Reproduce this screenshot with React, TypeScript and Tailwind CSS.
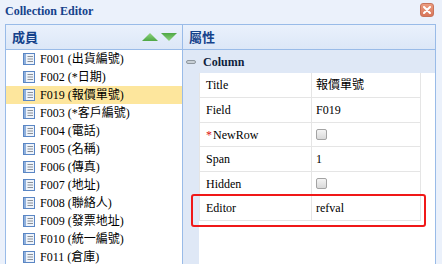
import React from 'react'

const members = [
  'F001 (出貨編號)',
  'F002 (*日期)',
  'F019 (報價單號)',
  'F003 (*客戶編號)',
  'F004 (電話)',
  'F005 (名稱)',
  'F006 (傳真)',
  'F007 (地址)',
  'F008 (聯絡人)',
  'F009 (發票地址)',
  'F010 (統一編號)',
  'F011 (倉庫)',
]

const props: { label: string; value?: string; check?: boolean; required?: boolean; h: string }[] = [
  { label: 'Title', value: '報價單號', h: 'h-[25px]' },
  { label: 'Field', value: 'F019', h: 'h-[25px]' },
  { label: 'NewRow', check: true, required: true, h: 'h-[24px]' },
  { label: 'Span', value: '1', h: 'h-[25px]' },
  { label: 'Hidden', check: true, h: 'h-[24px]' },
  { label: 'Editor', value: 'refval', h: 'h-[25px]' },
]

function ItemIcon() {
  return (
    <svg width="12" height="12" viewBox="0 0 12 12" className="shrink-0">
      <rect x="0.5" y="0.5" width="11" height="11" fill="#eef3fa" stroke="#5a86c4" />
      <rect x="1" y="1" width="2" height="10" fill="#8fb0dc" />
      <line x1="4.5" y1="3.5" x2="10" y2="3.5" stroke="#8a9199" />
      <line x1="4.5" y1="6" x2="10" y2="6" stroke="#8a9199" />
      <line x1="4.5" y1="8.5" x2="10" y2="8.5" stroke="#8a9199" />
    </svg>
  )
}

function Arrows() {
  return (
    <div className="flex items-center gap-[3px] mr-[5px]">
      <svg width="16" height="8" viewBox="0 0 16 8">
        <defs>
          <linearGradient id="gu" x1="0" y1="0" x2="0" y2="1">
            <stop offset="0" stopColor="#8fd47f" />
            <stop offset="1" stopColor="#4ea744" />
          </linearGradient>
        </defs>
        <polygon points="8,0 16,8 0,8" fill="url(#gu)" />
      </svg>
      <svg width="16" height="8" viewBox="0 0 16 8">
        <defs>
          <linearGradient id="gd" x1="0" y1="0" x2="0" y2="1">
            <stop offset="0" stopColor="#4ea744" />
            <stop offset="1" stopColor="#8fd47f" />
          </linearGradient>
        </defs>
        <polygon points="0,0 16,0 8,8" fill="url(#gd)" />
      </svg>
    </div>
  )
}

function CheckBox() {
  return (
    <div className="w-[11px] h-[11px] rounded-[2px] border border-[#a3a3a3] bg-gradient-to-b from-[#f4f4f4] to-[#d9d9d9]" />
  )
}

export default function App() {
  return (
    <div className="relative w-[442px] h-[264px] overflow-hidden bg-[#ebf1fb] font-['Liberation_Serif','Noto_Sans_CJK_TC',serif] text-[12px] text-black">
      {/* Title bar */}
      <div className="flex h-[24px] items-center justify-between pl-[5px] pr-[8px]">
        <span className="font-bold text-[#15428b] text-[12px] -mt-[3px]">Collection Editor</span>
        <button className="w-[14px] h-[14px] -mt-[4px] rounded-[3px] border border-[#c7735a] bg-gradient-to-b from-[#eb9c80] to-[#d8765a] flex items-center justify-center">
          <svg width="8" height="8" viewBox="0 0 8 8">
            <path d="M1 1 L7 7 M7 1 L1 7" stroke="white" strokeWidth="2" strokeLinecap="round" />
          </svg>
        </button>
      </div>

      {/* Body */}
      <div className="ml-[5px] w-[431px] h-[250px] border border-[#99bbe8] bg-white flex">
        {/* Members */}
        <div className="w-[177px] border-r border-[#99bbe8] flex flex-col">
          <div className="h-[25px] border-b border-[#99bbe8] bg-gradient-to-b from-[#eaf1fc] to-[#dce7f7] flex items-center justify-between pl-[6px]">
            <span className="font-bold text-[13px] text-[#15428b] font-['Noto_Sans_CJK_TC',sans-serif]">成員</span>
            <Arrows />
          </div>
          <div className="flex flex-col">
            {members.map((m, i) => (
              <div
                key={m}
                className={`h-[18px] flex items-center gap-[5px] pl-[17px] ${i === 2 ? 'bg-[#fde69d]' : ''}`}
              >
                <ItemIcon />
                <span className="whitespace-nowrap">{m}</span>
              </div>
            ))}
          </div>
        </div>

        {/* Properties */}
        <div className="w-[252px] flex flex-col">
          <div className="h-[25px] border-b border-[#99bbe8] bg-gradient-to-b from-[#eaf1fc] to-[#dce7f7] flex items-center pl-[6px]">
            <span className="font-bold text-[13px] text-[#15428b] font-['Noto_Sans_CJK_TC',sans-serif]">屬性</span>
          </div>
          <div className="h-[23px] bg-[#dfe8f6] flex items-center pl-[3px] gap-[7px]">
            <div className="w-[10px] h-[4px] rounded-[2px] border border-[#8e979f] bg-[#c9d0d6]" />
            <span className="font-bold text-[12px] text-[#0f1f3d]">Column</span>
          </div>
          <div className="flex flex-1">
            <div className="w-[16px] bg-[#dfe8f6]" />
            <div className="w-[222px] flex flex-col">
              {props.map((p) => (
                <div key={p.label} className={`${p.h} flex border-b border-l border-r border-[#e5e5e5]`}>
                  <div className="w-[112px] border-r border-[#e5e5e5] flex items-center pl-[6px]">
                    {p.required && <span className="text-[#e01010] mr-[1px]">*</span>}
                    <span>{p.label}</span>
                  </div>
                  <div className="flex-1 flex items-center pl-[4px]">
                    {p.check ? <CheckBox /> : <span>{p.value}</span>}
                  </div>
                </div>
              ))}
            </div>
            <div className="flex-1" />
          </div>
        </div>
      </div>

      {/* Highlight annotation */}
      <div className="absolute left-[191px] top-[194px] w-[235px] h-[33px] border-[2.5px] border-[#f01818] rounded-[3px]" />
    </div>
  )
}
